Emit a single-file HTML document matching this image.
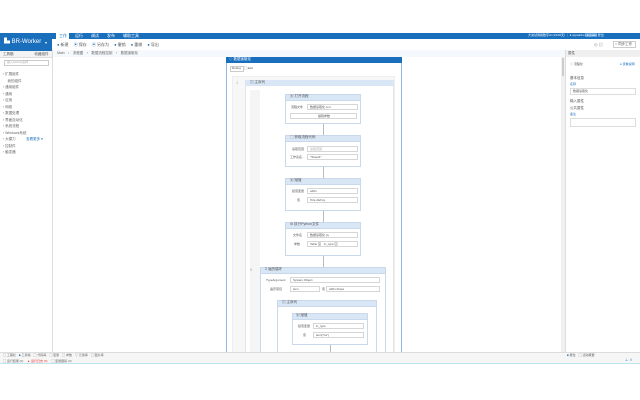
<!DOCTYPE html>
<html><head><meta charset="utf-8"><style>
*{margin:0;padding:0;box-sizing:border-box}
body{width:640px;height:400px;background:#fff;position:relative;overflow:hidden;font-family:"Liberation Sans","Noto Sans CJK SC",sans-serif;font-size:4px;color:#555}
div{position:absolute}
.t{white-space:nowrap;line-height:1}
.act{border:1px solid #c9d8ea;background:#fff}
.ah{left:0;right:0;top:0;height:6px;background:#d8e6f6;border-bottom:1px solid #c9d8ea}
.in{border:1px solid #d6d6d6;background:#fff;height:6px}
.ln{width:1px;background:#bbb}
</style></head><body>
<div style="left:0;top:33px;width:640px;height:6px;background:#1a6fbd"></div>
<div style="left:0;top:33px;width:52px;height:18px;background:#1a6fbd"></div>
<div class="t" style="left:4px;top:39px;color:#fff;font-size:6px">▙ BR-Worker</div>
<div class="t" style="left:45px;top:41px;color:#fff;font-size:4px">▾</div>
<div style="left:56px;top:33px;width:13px;height:7px;background:#fff"></div>
<div class="t" style="left:59px;top:34px;color:#1a6fbd">工作</div>
<div class="t" style="left:75px;top:34px;color:#fff">运行　　调试　　发布　　辅助工具</div>
<div class="t" style="left:528px;top:34px;color:#fff;font-size:3px">大洲试用版数字Ai (1/100天) ｜ ● qiyuanbo <span style="background:#5a9ad8">Upgrade</span> 登出</div>
<div class="t" style="left:57px;top:43px;color:#1a6fbd">● <span style="color:#555">新建</span>　 ▣ <span style="color:#555">保存</span>　 ▣ <span style="color:#555">另存为</span>　 ● <span style="color:#555">撤销</span>　 ● <span style="color:#555">重做</span>　 ● <span style="color:#555">导出</span></div>
<div class="t" style="left:594px;top:43px;color:#777">◷ ▤</div>
<div style="left:613px;top:41px;width:23px;height:7px;border:1px solid #ccc"></div>
<div class="t" style="left:615px;top:43px;font-size:3.5px">○ 同步工作</div>
<div style="left:52px;top:50px;width:513px;height:7px;background:#f5f8fc"></div>
<div class="t" style="left:57px;top:52px;color:#666;font-size:3.5px">Main　›　流程图　›　数据流程控制　›　数据读取化</div>
<div style="left:52px;top:50px;width:1px;height:302px;background:#ddd"></div>
<div style="left:0;top:51px;width:52px;height:7px;background:#f3f3f3;border-bottom:1px solid #ddd"></div>
<div class="t" style="left:3px;top:53px;font-size:3.5px">工具箱　　　　　　收藏组件</div>
<div style="left:4px;top:60px;width:45px;height:6px;border:1px solid #ccc"></div>
<div class="t" style="left:7px;top:61px;color:#aaa;font-size:3px">输入activity名称</div>
<div class="t" style="left:3px;top:71px;line-height:6.5px;color:#666;font-size:3.5px">› 扩展组件<br>　 我的组件<br>› 通用组件<br>› 通用<br>› 应用<br>› 网络<br>› 数据处理<br>› 界面自动化<br>› 系统流程<br>› Windows系统<br>› 大模力　　　<span style="color:#1a6fbd">查看更多 ▾</span><br>› 控制件<br>› 触发器</div>
<div style="left:226px;top:57px;width:176px;height:296px;border:1px solid #8fb9e3;background:#fff"></div>
<div style="left:226px;top:57px;width:176px;height:6px;background:#1a6fbd"></div>
<div class="t" style="left:229px;top:58px;color:#fff;font-size:3.5px">◇ 数据读取化</div>
<div style="left:230px;top:66px;width:14px;height:6px;border:1px solid #ccc"></div>
<div class="t" style="left:232px;top:67px;font-size:3px">Debug　▢ Edit</div>
<div style="left:232px;top:76px;width:163px;height:277px;background:#f7f7f7;border:1px solid #eee"></div>
<div style="left:245px;top:80px;width:149px;height:273px;background:#fff;border:1px solid #e5e5e5"></div>
<div style="left:245px;top:80px;width:149px;height:6px;background:#d8e6f6"></div>
<div class="t" style="left:250px;top:81px;font-size:3.5px">▤ 主序列</div>
<div style="left:250px;top:90px;width:10px;height:263px;background:#f5f5f5"></div>
<div class="t" style="left:236px;top:81px;color:#aaa">1</div>
<div class="act" style="left:285px;top:94px;width:76px;height:30px"><div class="ah"></div></div>
<div class="t" style="left:290px;top:95px;font-size:3.5px">▣ 打开流程</div>
<div class="t" style="left:291px;top:106px;font-size:3px">流程文件</div>
<div class="in" style="left:307px;top:104px;width:51px"></div><div class="t" style="left:310px;top:106px;font-size:3px">数据读取化.xml</div>
<div class="in" style="left:290px;top:113px;width:67px"></div><div class="t" style="left:318px;top:115px;font-size:3px">编辑参数</div>
<div class="ln" style="left:323px;top:124px;height:11px"></div>
<div class="act" style="left:285px;top:135px;width:76px;height:32px"><div class="ah"></div></div>
<div class="t" style="left:290px;top:136px;font-size:3.5px">▢ 获取流程代码</div>
<div class="t" style="left:292px;top:148px;font-size:3px">读取范围</div>
<div class="in" style="left:307px;top:146px;width:51px"></div><div class="t" style="left:310px;top:148px;color:#aaa;font-size:3px">读取范围</div>
<div class="t" style="left:290px;top:156px;font-size:3px">工作表名...</div>
<div class="in" style="left:307px;top:154px;width:51px"></div><div class="t" style="left:310px;top:156px;font-size:3px">"Sheet1"</div>
<div class="ln" style="left:323px;top:167px;height:11px"></div>
<div class="act" style="left:285px;top:178px;width:76px;height:33px"><div class="ah"></div></div>
<div class="t" style="left:290px;top:179px;font-size:3.5px">▣ 赋值</div>
<div class="t" style="left:292px;top:190px;font-size:3px">赋值变量</div>
<div class="in" style="left:307px;top:188px;width:51px"></div><div class="t" style="left:310px;top:190px;font-size:3px">sdDx</div>
<div class="t" style="left:297px;top:199px;font-size:3px">值</div>
<div class="in" style="left:307px;top:197px;width:51px"></div><div class="t" style="left:310px;top:199px;font-size:3px">ff.ils.dtsfruy</div>
<div class="ln" style="left:323px;top:211px;height:11px"></div>
<div class="act" style="left:285px;top:222px;width:76px;height:34px"><div class="ah"></div></div>
<div class="t" style="left:290px;top:223px;font-size:3.5px">⚙ 执行Python文件</div>
<div class="t" style="left:293px;top:234px;font-size:3px">文件名</div>
<div class="in" style="left:307px;top:232px;width:51px"></div><div class="t" style="left:310px;top:234px;font-size:3px">数据读取化.py</div>
<div class="t" style="left:294px;top:243px;font-size:3px">参数</div>
<div class="in" style="left:307px;top:241px;width:51px"></div><div class="t" style="left:310px;top:243px;font-size:3px">Table ⊠　ln_type ⊠</div>
<div class="ln" style="left:323px;top:256px;height:11px"></div>
<div class="t" style="left:250px;top:268px;color:#aaa">5</div>
<div class="act" style="left:260px;top:267px;width:126px;height:86px;border-bottom:none"><div class="ah"></div></div>
<div class="t" style="left:265px;top:268px;font-size:3.5px">Σ 遍历循环</div>
<div class="t" style="left:266px;top:279px;font-size:3px">TypeArgument</div>
<div class="in" style="left:290px;top:277px;width:90px"></div><div class="t" style="left:293px;top:279px;font-size:3px">System.Object</div>
<div class="t" style="left:270px;top:288px;font-size:3px">遍历项目</div>
<div class="in" style="left:290px;top:286px;width:30px"></div><div class="t" style="left:293px;top:288px;font-size:3px">item</div>
<div class="t" style="left:322px;top:288px;font-size:3px">值</div>
<div class="in" style="left:326px;top:286px;width:54px"></div><div class="t" style="left:329px;top:288px;font-size:3px">sdDx.Rows</div>
<div class="act" style="left:277px;top:300px;width:100px;height:53px;border-bottom:none"><div class="ah"></div></div>
<div class="t" style="left:282px;top:301px;font-size:3.5px">▤ 主序列</div>
<div class="act" style="left:292px;top:313px;width:76px;height:32px"><div class="ah"></div></div>
<div class="t" style="left:296px;top:314px;font-size:3.5px">▣ 赋值</div>
<div class="t" style="left:298px;top:325px;font-size:3px">赋值变量</div>
<div class="in" style="left:313px;top:323px;width:51px"></div><div class="t" style="left:316px;top:325px;font-size:3px">ln_type</div>
<div class="t" style="left:303px;top:334px;font-size:3px">值</div>
<div class="in" style="left:313px;top:332px;width:51px"></div><div class="t" style="left:316px;top:334px;font-size:3px">item["ha"]</div>
<div class="ln" style="left:330px;top:345px;height:7px"></div>
<div style="left:561px;top:57px;width:4px;height:295px;background:#f0f0f0"></div>
<div style="left:562px;top:58px;width:2px;height:18px;background:#ccc"></div>
<div style="left:565px;top:50px;width:75px;height:7px;background:#f0f0f0;border-left:1px solid #ddd"></div>
<div class="t" style="left:568px;top:52px;font-size:3.5px">属性</div>
<div style="left:565px;top:57px;width:1px;height:295px;background:#ddd"></div>
<div class="t" style="left:570px;top:63px;font-size:3px">◇ 流程化</div>
<div class="t" style="left:620px;top:63px;color:#1a6fbd;font-size:3px">● 查看说明</div>
<div class="t" style="left:570px;top:77px;font-size:3.5px">基本信息</div>
<div class="t" style="left:570px;top:83px;color:#1a6fbd;font-size:3px">名称</div>
<div style="left:570px;top:88px;width:66px;height:7px;border:1px solid #ddd"></div>
<div class="t" style="left:573px;top:90px;font-size:3px">数据读取化</div>
<div class="t" style="left:570px;top:100px;font-size:3.5px">输入属性</div>
<div class="t" style="left:570px;top:107px;font-size:3.5px">公共属性</div>
<div class="t" style="left:570px;top:113px;color:#1a6fbd;font-size:3px">备注</div>
<div style="left:570px;top:118px;width:66px;height:9px;border:1px solid #ddd"></div>
<div style="left:0;top:352px;width:640px;height:12px;background:#f6f6f6;border-top:1px solid #ddd;border-bottom:1px solid #bfe3ef"></div>
<div class="t" style="left:3px;top:354px;color:#666;font-size:3px">▢ 工程栏　<span style="color:#1a6fbd">■</span> 工具箱　▢ 代码库　▢ 变量　▢ 参数　▽ 元素库　▢ 图片库</div>
<div class="t" style="left:567px;top:354px;color:#666;font-size:3px"><span style="color:#1a6fbd">■</span> 属性　▢ 活动概要</div>
<div class="t" style="left:3px;top:360px;color:#666;font-size:3px">▢ 运行结果 (0)　 <span style="color:#e33">▲ 运行日志 (0)</span>　 ▢ 变量跟踪 (0)</div>
<div class="t" style="left:625px;top:359px;color:#1a6fbd;font-size:3.5px">⊥ ⇪</div>
</body></html>
